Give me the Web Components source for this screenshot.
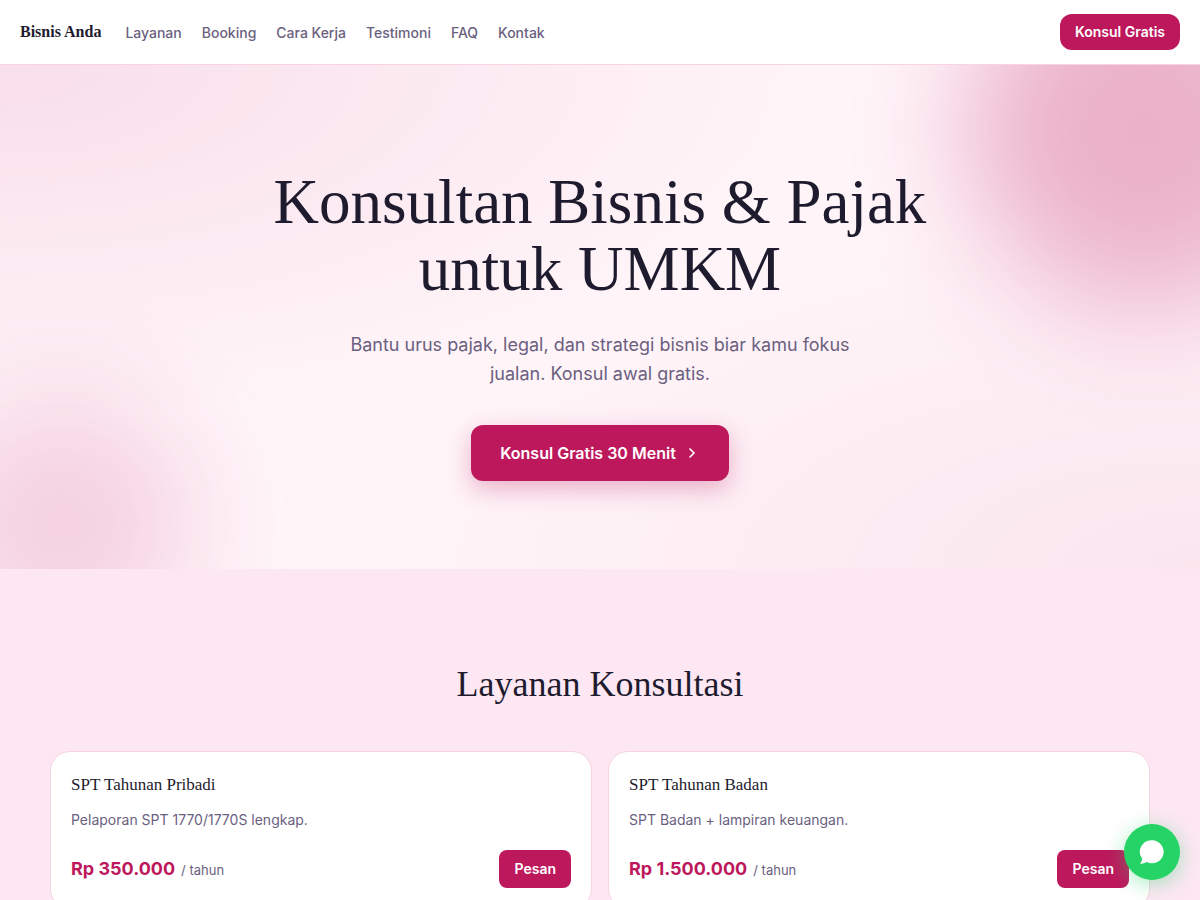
<!DOCTYPE html>
<html lang="id">
<head>
<meta charset="utf-8">
<meta name="viewport" content="width=device-width, initial-scale=1">
<title>Bisnis Anda</title>
<style>
  :root {
    --brand: #be185d;
    --ink: #1e1b2e;
    --muted: #6b5f80;
    --line: #f8d3e1;
    --blush: #fce7f3;
    --serif: "Liberation Serif", serif;
    --sans: Inter, sans-serif;
  }
  body { margin: 0; background: #fff; color: var(--ink); font-family: var(--sans); }
</style>
</head>
<body>
<site-header brand="Bisnis Anda">
  <nav-link href="#layanan">Layanan</nav-link>
  <nav-link href="#booking">Booking</nav-link>
  <nav-link href="#cara-kerja">Cara Kerja</nav-link>
  <nav-link href="#testimoni">Testimoni</nav-link>
  <nav-link href="#faq">FAQ</nav-link>
  <nav-link href="#kontak">Kontak</nav-link>
  <action-button slot="action" size="nav">Konsul Gratis</action-button>
</site-header>
<main>
  <hero-banner>
    <span slot="title">Konsultan Bisnis &amp; Pajak untuk UMKM</span>
    <span slot="lead">Bantu urus pajak, legal, dan strategi bisnis biar kamu fokus jualan. Konsul awal gratis.</span>
    <action-button slot="action" size="large" arrow>Konsul Gratis 30 Menit</action-button>
  </hero-banner>
  <service-section id="layanan">
    <span slot="title">Layanan Konsultasi</span>
    <service-card>
      <span slot="name">SPT Tahunan Pribadi</span>
      <span slot="detail">Pelaporan SPT 1770/1770S lengkap.</span>
      <span slot="price">Rp 350.000</span>
      <span slot="unit">/ tahun</span>
    </service-card>
    <service-card>
      <span slot="name">SPT Tahunan Badan</span>
      <span slot="detail">SPT Badan + lampiran keuangan.</span>
      <span slot="price">Rp 1.500.000</span>
      <span slot="unit">/ tahun</span>
    </service-card>
  </service-section>
</main>
<chat-bubble></chat-bubble>

<script>
const define = (name, html, setup) => {
  const template = document.createElement('template');
  template.innerHTML = html;
  customElements.define(name, class extends HTMLElement {
    constructor() {
      super();
      this.attachShadow({ mode: 'open' }).append(template.content.cloneNode(true));
    }
    connectedCallback() {
      if (setup) setup(this, this.shadowRoot);
    }
  });
};

define('nav-link', `
  <style>
    :host { display: block; }
    a { display: block; color: var(--muted); font: 500 14px/20px var(--sans); text-decoration: none; white-space: nowrap; }
    a:hover { color: var(--brand); }
  </style>
  <a><slot></slot></a>
`, (host, root) => { root.querySelector('a').href = host.getAttribute('href'); });

define('action-button', `
  <style>
    :host { display: block; }
    button {
      display: flex; align-items: center; justify-content: center; gap: 8px;
      border: 0; margin: 0; padding: 0 15px; height: 38px; border-radius: 8px;
      background: var(--brand); color: #fff; font: 600 14px/20px var(--sans);
      white-space: nowrap; cursor: pointer;
    }
    :host([size="nav"]) button { height: 36px; border-radius: 12px; }
    :host([size="large"]) button {
      height: 56px; padding: 0 29px; border-radius: 12px; font-size: 16px; line-height: 24px;
      box-shadow: 0 8px 24px rgba(190, 24, 93, .3);
    }
    svg { display: none; width: 16px; height: 16px; }
    :host([arrow]) svg { display: block; }
  </style>
  <button type="button"><slot></slot><svg viewBox="0 0 24 24" fill="none" stroke="currentColor" stroke-width="2.5" stroke-linecap="round" stroke-linejoin="round" aria-hidden="true"><path d="M9 18l6-6-6-6"/></svg></button>
`);

define('site-header', `
  <style>
    :host { display: block; background: #fff; border-bottom: 1px solid var(--line); }
    header { display: flex; align-items: center; gap: 24px; padding: 14px 20px; }
    .brand { color: var(--ink); font: 700 16px/20px var(--serif); text-decoration: none; white-space: nowrap; }
    nav { display: flex; flex: 1; gap: 20px; padding-top: 2px; }
  </style>
  <header>
    <a class="brand" href="#"></a>
    <nav aria-label="Utama"><slot></slot></nav>
    <slot name="action"></slot>
  </header>
`, (host, root) => { root.querySelector('.brand').textContent = host.getAttribute('brand'); });

define('hero-banner', `
  <style>
    :host {
      display: block; position: relative; overflow: hidden; text-align: center;
      background:
        radial-gradient(ellipse at 0% 0%, rgba(190, 24, 93, .1), transparent 50%),
        radial-gradient(ellipse at 100% 100%, rgba(190, 24, 93, .07), transparent 50%),
        #fff5f9;
    }
    .glow { position: absolute; border-radius: 50%; background: var(--brand); filter: blur(60px); }
    .east { top: -116px; right: -124px; width: 360px; height: 360px; opacity: .3; }
    .west { bottom: -84px; left: -68px; width: 260px; height: 260px; opacity: .16; }
    .content { position: relative; display: flex; flex-direction: column; align-items: center; padding: 104px 24px 88px; }
    h1 { margin: 0; max-width: 760px; font: 400 63px/67px var(--serif); color: var(--ink); }
    p { margin: 27px 0 37px; max-width: 520px; font: 400 18px/29px var(--sans); color: var(--muted); }
  </style>
  <div class="glow east"></div>
  <div class="glow west"></div>
  <div class="content">
    <h1><slot name="title"></slot></h1>
    <p><slot name="lead"></slot></p>
    <slot name="action"></slot>
  </div>
`);

define('service-section', `
  <style>
    :host { display: block; background: var(--blush); padding: 96px 24px; }
    .inner { max-width: 1100px; margin: 0 auto; }
    h2 { margin: 0 0 48px; text-align: center; font: 400 36px/38px var(--serif); color: var(--ink); }
    .grid { display: grid; grid-template-columns: repeat(auto-fit, minmax(320px, 1fr)); gap: 16px; }
  </style>
  <div class="inner">
    <h2><slot name="title"></slot></h2>
    <div class="grid"><slot></slot></div>
  </div>
`);

define('service-card', `
  <style>
    :host { display: block; background: #fff; border: 1px solid var(--line); border-radius: 20px; padding: 20px; }
    h3 { margin: 0 0 10px; font: 400 17px/26px var(--serif); color: var(--ink); }
    p { margin: 0 0 18px; font: 400 14px/24px var(--sans); color: var(--muted); }
    .row { display: flex; align-items: center; justify-content: space-between; gap: 12px; }
    .cost { display: flex; align-items: baseline; gap: 6px; line-height: 28px; color: var(--brand); }
    .price { font-size: 18px; font-weight: 700; }
    .unit { font-size: 13px; color: var(--muted); }
  </style>
  <h3><slot name="name"></slot></h3>
  <p><slot name="detail"></slot></p>
  <div class="row">
    <div class="cost"><span class="price"><slot name="price"></slot></span><span class="unit"><slot name="unit"></slot></span></div>
    <action-button>Pesan</action-button>
  </div>
`);

define('chat-bubble', `
  <style>
    :host { display: block; position: fixed; right: 20px; bottom: 20px; }
    a {
      display: flex; align-items: center; justify-content: center; width: 56px; height: 56px;
      border-radius: 50%; background: #25d366; color: #fff; box-shadow: 0 4px 20px rgba(37, 211, 102, .4);
    }
    svg { width: 28px; height: 28px; }
  </style>
  <a href="#kontak" aria-label="Chat"><svg viewBox="0 0 28 28" fill="currentColor" aria-hidden="true"><path d="M14.200 2.300a11.500 11.500 0 1 1-5.400 21.700c-2 .9-4.400 1.700-6.700 1.900 1.100-1.700 1.900-3.400 2.100-5.200A11.500 11.500 0 0 1 14.200 2.300z"/></svg></a>
`);
</script>
</body>
</html>
